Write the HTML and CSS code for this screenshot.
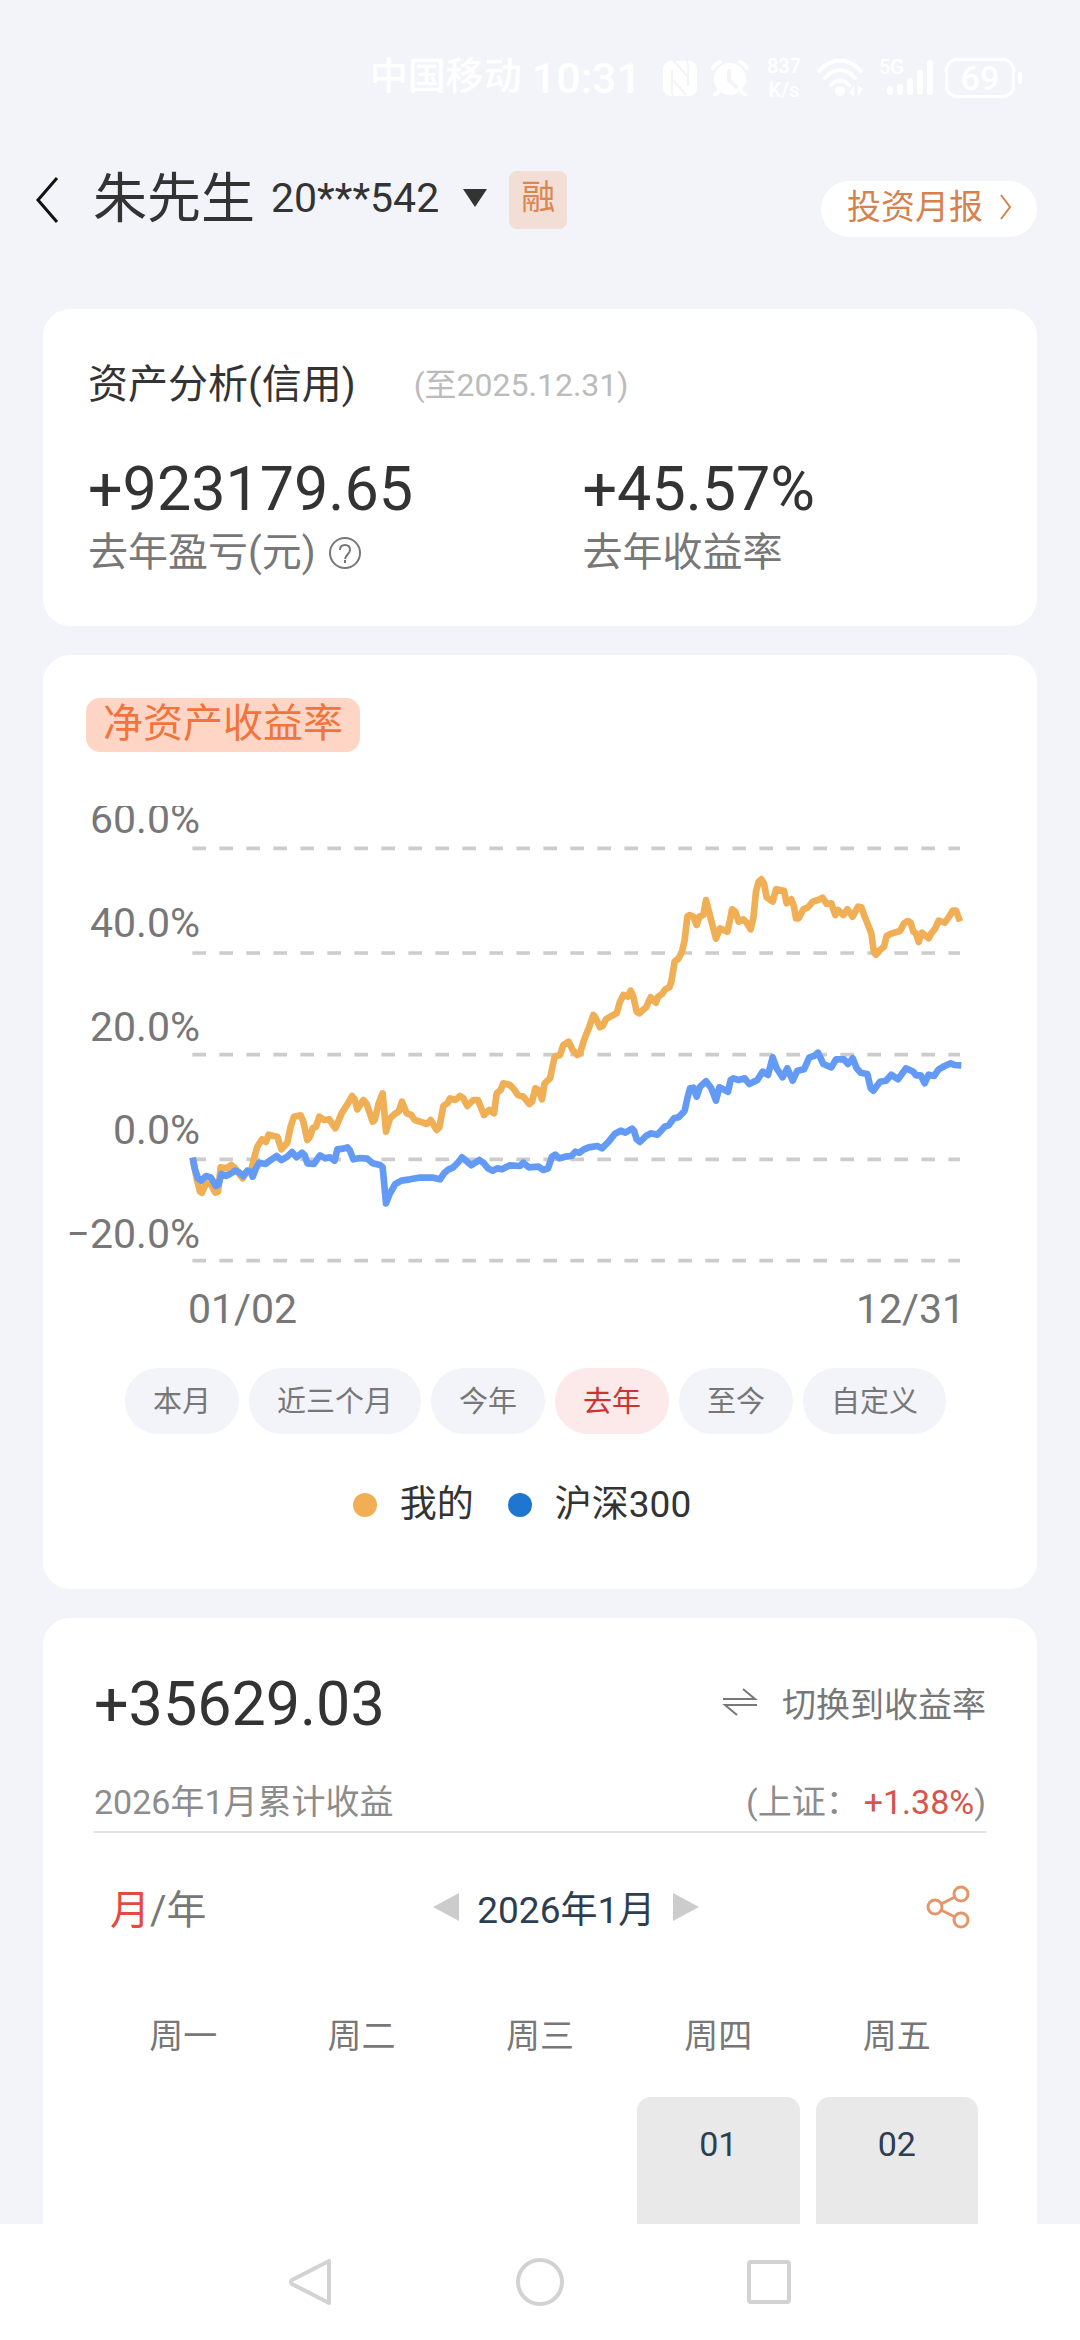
FILE: index.html
```html
<!DOCTYPE html>
<html lang="zh-CN">
<head>
	<meta charset="utf-8">
	<meta name="viewport" content="width=device-width, initial-scale=1">
	<title>资产分析</title>
	<link rel="stylesheet" href="styles.css">
</head>
<body>
	<div class="status-bar">
		<span class="carrier">中国移动</span>
		<span class="clock">10:31</span>
		<svg class="icon-nfc" width="34" height="36" viewBox="0 0 34 36">
			<rect width="34" height="35" y="1" rx="8" fill="#fff"/>
			<path d="M10 36q-2-5-1-12V10M24 0q2 5 1 12v14M11 1l13 15M10 20l13 15" stroke="#f3f4f9" stroke-width="2" fill="none"/>
		</svg>
		<svg class="icon-alarm" width="38" height="36" viewBox="0 0 38 36">
			<circle cx="19" cy="19" r="16" fill="#fff"/>
			<path d="M2 8q2-4 7-6M36 8q-2-4-7-6M8 31l-4 4M30 31l4 4" stroke="#fff" stroke-width="4" stroke-linecap="round" fill="none"/>
			<path d="M18 9v11l8 8" stroke="#f3f4f9" stroke-width="4" fill="none"/>
		</svg>
		<span class="speed">837<br>K/s</span>
		<svg class="icon-wifi" width="48" height="38" viewBox="0 0 48 38">
			<path d="M2 12q21-21 42 0M8 19q15-16 30 0M14 26q9-9 18 0" stroke="#fff" stroke-width="4" stroke-linecap="round" fill="none"/>
			<circle cx="23" cy="32" r="5" fill="#fff"/>
			<path d="M32 34l5-7v10zM41 27v10l5-7z" fill="#fff"/>
		</svg>
		<span class="signal">
			<span class="signal-type">5G</span>
			<svg width="54" height="38" viewBox="0 0 54 38" stroke="#fff" stroke-width="6" stroke-linecap="round">
				<path d="M11 30v3M21 28v5M31 22v11M41 14v19M51 4v29"/>
			</svg>
		</span>
		<span class="battery"><span class="battery-level">69</span></span>
	</div>

	<header class="header">
		<button class="back" aria-label="返回">
			<svg width="24" height="48" viewBox="0 0 24 48"><path d="M22 2L3 24l19 22" stroke="#111" stroke-width="3" fill="none"/></svg>
		</button>
		<h1 class="user-name">朱先生</h1>
		<button class="account">20***542
			<svg width="24" height="18" viewBox="0 0 24 18"><path d="M0 0h24L12 18z" fill="#333"/></svg>
		</button>
		<span class="badge">融</span>
		<a class="report-link" href="#report">投资月报
			<svg width="14" height="26" viewBox="0 0 14 26"><path d="M2 1l9 12-9 12" stroke="#d5824e" stroke-width="2" fill="none"/></svg>
		</a>
	</header>

	<main class="content">
		<section class="card summary">
			<div class="summary-title">
				<h2>资产分析(信用)</h2>
				<span class="until">(至2025.12.31)</span>
			</div>
			<div class="summary-grid">
				<div>
					<div class="amount">+923179.65</div>
					<div class="label">去年盈亏(元)
						<button class="help" aria-label="说明">
							<svg width="34" height="34" viewBox="0 0 34 34" fill="none" stroke="#777" stroke-width="2">
								<circle cx="17" cy="17" r="15"/>
								<path d="M12 14q0-5 5-5t5 5q0 2-2 4t-3 5M17 24v3"/>
							</svg>
						</button>
					</div>
				</div>
				<div>
					<div class="amount">+45.57%</div>
					<div class="label">去年收益率</div>
				</div>
			</div>
		</section>

		<section class="card yield">
			<h2 class="tag">净资产收益率</h2>
			<svg class="chart" viewBox="0 0 994 530">
				<g class="axis axis-y">
					<text x="157" y="27">60.0%</text>
					<text x="157" y="131">40.0%</text>
					<text x="157" y="235">20.0%</text>
					<text x="157" y="338">0.0%</text>
					<text x="157" y="442">−20.0%</text>
				</g>
				<g class="axis">
					<text x="145" y="517">01/02</text>
					<text class="axis-end" x="922" y="517">12/31</text>
				</g>
				<svg x="137" y="14" width="800" height="450" viewBox="0 0 2400 1350">
					<path class="grid-line" d="M37 85H2340M37 399H2340M37 704H2340M37 1018H2340M37 1322H2340"/>
					<polyline class="line line-mine" points="38,1013 50,1075 60,1115 66,1118 78,1090 92,1092 106,1118 114,1115 122,1042 140,1045 154,1035 166,1045 180,1065 188,1075 200,1055 214,1050 222,1015 232,980 246,958 258,966 266,944 280,948 292,950 304,988 322,968 332,920 342,890 362,886 370,905 382,960 390,950 398,925 408,920 418,890 432,900 448,898 466,925 486,878 504,850 516,828 524,838 532,868 550,840 560,852 578,905 584,900 596,850 608,820 618,935 630,895 644,882 656,875 666,845 680,880 694,885 704,900 720,905 740,912 752,900 770,930 778,922 790,858 802,850 810,835 826,840 840,828 850,835 862,858 880,840 894,840 912,885 928,870 942,880 950,820 962,810 970,790 990,795 1002,808 1014,825 1030,830 1048,852 1056,845 1066,805 1076,810 1086,838 1094,790 1110,775 1124,710 1140,705 1150,675 1166,665 1178,690 1192,705 1200,700 1212,660 1228,620 1240,585 1246,592 1260,622 1268,618 1278,598 1290,590 1310,580 1320,545 1330,525 1344,530 1352,512 1360,530 1370,575 1378,580 1398,562 1412,532 1428,548 1434,530 1446,522 1456,508 1468,502 1474,485 1484,425 1496,415 1506,395 1514,360 1522,290 1528,285 1540,290 1550,315 1558,290 1570,285 1578,240 1588,280 1608,356 1620,325 1642,335 1650,300 1656,268 1666,275 1676,305 1690,298 1700,308 1712,328 1720,295 1728,215 1736,185 1744,178 1752,190 1760,232 1778,245 1788,208 1812,212 1820,250 1834,238 1842,260 1848,295 1856,295 1870,268 1884,262 1898,245 1914,240 1928,233 1940,252 1954,250 1966,285 1974,270 1990,285 2002,268 2018,290 2034,260 2044,262 2056,295 2074,340 2082,398 2088,404 2100,390 2112,380 2120,348 2136,340 2160,333 2172,310 2184,303 2192,308 2200,335 2208,340 2216,366 2226,338 2246,355 2254,340 2266,325 2276,302 2294,308 2306,292 2318,272 2328,272 2340,304"/>
					<polyline class="line line-index" points="38,1013 44,1045 54,1075 64,1082 78,1068 92,1072 108,1098 116,1093 124,1062 138,1068 150,1062 166,1052 176,1056 190,1068 202,1052 212,1055 218,1070 228,1045 238,1028 256,1032 272,1020 290,1008 304,1020 322,1010 336,996 350,1012 366,998 374,1005 382,1030 402,1032 410,1020 420,1006 436,1015 450,1012 464,1022 472,988 490,986 502,982 510,992 520,1018 540,1014 562,1016 578,1030 600,1035 608,1042 618,1150 630,1120 646,1092 664,1082 690,1078 716,1073 760,1073 780,1078 792,1060 806,1048 820,1042 836,1025 846,1012 858,1022 874,1036 898,1020 910,1028 924,1045 938,1052 952,1045 966,1048 990,1036 1020,1038 1030,1028 1046,1042 1076,1040 1090,1050 1104,1045 1116,1010 1126,1004 1138,1015 1156,1010 1174,1008 1186,995 1198,998 1212,988 1226,982 1252,978 1266,985 1286,965 1304,942 1322,932 1336,938 1356,926 1362,932 1370,958 1380,966 1398,948 1412,940 1432,944 1454,920 1466,916 1482,895 1496,892 1514,872 1522,835 1530,805 1540,803 1550,830 1560,800 1578,784 1594,805 1608,842 1618,802 1630,808 1644,815 1652,780 1660,775 1676,780 1694,775 1708,792 1732,780 1748,755 1764,765 1778,712 1790,745 1808,772 1822,745 1838,782 1852,752 1872,748 1888,712 1902,708 1914,698 1930,732 1954,742 1968,718 1992,718 2004,732 2018,715 2030,745 2042,758 2062,762 2072,805 2080,812 2100,785 2118,782 2134,764 2154,778 2178,745 2200,755 2208,766 2222,766 2234,790 2246,764 2262,768 2276,748 2294,738 2312,730 2324,735 2344,736"/>
				</svg>
			</svg>
			<div class="ranges">
				<button>本月</button>
				<button>近三个月</button>
				<button>今年</button>
				<button class="active">去年</button>
				<button>至今</button>
				<button>自定义</button>
			</div>
			<div class="legend">
				<span class="legend-item mine">我的</span>
				<span class="legend-item index">沪深300</span>
			</div>
		</section>

		<section class="card calendar">
			<div class="calendar-top">
				<div class="amount">+35629.03</div>
				<button class="switch">
					<svg width="36" height="28" viewBox="0 0 36 28" fill="none" stroke="#777" stroke-width="2">
						<path d="M1 11h32L21 1M35 17H3l12 10"/>
					</svg>
					切换到收益率
				</button>
			</div>
			<div class="calendar-sub">
				<span>2026年1月累计收益</span>
				<span>(上证：<span class="up">+1.38%</span>)</span>
			</div>
			<div class="calendar-nav">
				<div class="mode"><button class="active">月</button>/<button>年</button></div>
				<div class="month">
					<button aria-label="上个月"><svg width="26" height="28" viewBox="0 0 26 28"><path d="M26 0v28L0 14z" fill="#ccc"/></svg></button>
					<span>2026年1月</span>
					<button aria-label="下个月"><svg width="26" height="28" viewBox="0 0 26 28"><path d="M0 0v28l26-14z" fill="#ccc"/></svg></button>
				</div>
				<button class="share" aria-label="分享">
					<svg width="44" height="44" viewBox="0 0 44 44" fill="none" stroke="#e2976a" stroke-width="3">
						<circle cx="9" cy="22" r="7"/>
						<circle cx="35" cy="9" r="7"/>
						<circle cx="35" cy="35" r="7"/>
						<path d="M15 19l14-7M15 25l14 7"/>
					</svg>
				</button>
			</div>
			<table class="days">
				<thead>
					<tr>
						<th>周一</th>
						<th>周二</th>
						<th>周三</th>
						<th>周四</th>
						<th>周五</th>
					</tr>
				</thead>
				<tbody>
					<tr>
						<td></td>
						<td></td>
						<td></td>
						<td><button>01</button></td>
						<td><button>02</button></td>
					</tr>
				</tbody>
			</table>
		</section>
	</main>

	<nav class="system-nav">
		<button aria-label="返回"><svg width="48" height="50" viewBox="0 0 48 50"><path d="M42 4v42L5 27q-2-2 0-4z"/></svg></button>
		<button aria-label="主屏幕"><svg width="48" height="50" viewBox="0 0 48 50"><circle cx="24" cy="25" r="22"/></svg></button>
		<button aria-label="最近任务"><svg width="48" height="50" viewBox="0 0 48 50"><rect x="4" y="5" width="40" height="40" rx="2"/></svg></button>
	</nav>
</body>
</html>
```

FILE: styles.css
```css
* {
	box-sizing: border-box;
}

body, button {
	font-family: Roboto, "Noto Sans CJK SC", sans-serif;
}

body {
	display: flex;
	flex-direction: column;
	height: 100vh;
	margin: 0;
	background: #f3f4f9;
	color: #333;
	overflow: hidden;
}

button {
	border: none;
	background: none;
	padding: 0;
	margin: 0;
	color: inherit;
	font-size: inherit;
	line-height: inherit;
}

svg {
	display: block;
	flex-shrink: 0;
}

h1, h2 {
	margin: 0;
	font-weight: normal;
}

/* status bar */
.status-bar {
	display: flex;
	flex-shrink: 0;
	align-items: center;
	justify-content: flex-end;
	height: 120px;
	padding: 36px 58px 0 0;
	color: #fff;
	font-weight: 500;
}

.carrier {
	font-size: 38px;
	line-height: 44px;
	padding-bottom: 4px;
}

.clock {
	margin: 0 22px 0 10px;
	font-size: 43px;
}

.icon-alarm {
	margin: 0 18px 0 14px;
}

.speed {
	font-size: 20px;
	line-height: 24px;
	text-align: center;
}

.icon-wifi {
	margin: 0 14px 0 16px;
}

.signal {
	position: relative;
}

.signal-type {
	position: absolute;
	top: -4px;
	left: 0;
	font-size: 20px;
	line-height: 24px;
}

.battery {
	display: flex;
	align-items: center;
	margin-left: 12px;
}

.battery-level {
	width: 70px;
	border: 3px solid #fff;
	border-radius: 12px;
	font-size: 34px;
	line-height: 34px;
	text-align: center;
}

.battery::after {
	content: "";
	width: 4px;
	height: 12px;
	margin-left: 3px;
	border-radius: 2px;
	background: #fff;
}

/* header */
.header {
	display: flex;
	flex-shrink: 0;
	align-items: center;
	height: 160px;
	padding: 0 43px 0 35px;
}

.user-name {
	margin: 0 16px 0 34px;
	font-size: 54px;
	line-height: 64px;
}

.account {
	display: flex;
	align-items: center;
	gap: 24px;
	padding-bottom: 4px;
	font-size: 41px;
}

.badge {
	height: 58px;
	margin-left: 22px;
	padding: 0 12px;
	border-radius: 8px;
	background: #f2ded4;
	color: #dd8450;
	font-size: 34px;
	line-height: 52px;
}

.report-link {
	display: flex;
	align-items: center;
	gap: 16px;
	height: 56px;
	margin: 18px 0 0 auto;
	padding: 0 24px 4px 26px;
	border-radius: 28px;
	background: #fff;
	color: #d5824e;
	font-size: 34px;
	line-height: 50px;
	text-decoration: none;
}

/* cards */
.content {
	display: flex;
	flex: 1;
	flex-direction: column;
	gap: 29px;
	min-height: 0;
	padding: 29px 43px 0;
	overflow: hidden;
}

.card {
	flex-shrink: 0;
	border-radius: 27px;
	background: #fff;
}

.amount {
	font-size: 61px;
	line-height: 72px;
}

.summary {
	padding: 50px 0 47px 45px;
}

.summary-title {
	display: flex;
	align-items: center;
	gap: 58px;
	line-height: 52px;
}

.summary-title h2 {
	font-size: 40px;
}

.until {
	color: #bbb;
	font-size: 32px;
}

.summary-grid {
	display: grid;
	grid-template-columns: 1fr 1fr;
	gap: 40px;
	margin-top: 42px;
}

.label {
	display: flex;
	align-items: center;
	gap: 12px;
	margin-top: 2px;
	color: #777;
	font-size: 40px;
	line-height: 52px;
}

/* yield chart */
.yield {
	padding: 43px 0 61px;
}

.tag {
	width: fit-content;
	height: 54px;
	margin-left: 43px;
	padding: 0 17px;
	border-radius: 14px;
	background: #ffd6c6;
	color: #f0743b;
	font-size: 40px;
	line-height: 52px;
}

.chart {
	width: 100%;
	margin-top: 54px;
}

.axis {
	fill: #777;
	font-size: 41px;
}

.axis-y, .axis-end {
	text-anchor: end;
}

.grid-line {
	stroke: #ccc;
	stroke-width: 11;
	stroke-dasharray: 41 40;
}

.line {
	fill: none;
	stroke-width: 20;
	stroke-linejoin: round;
}

.line-mine {
	stroke: #f0ae55;
}

.line-index {
	stroke: #639af5;
}

.ranges {
	display: flex;
	gap: 10px;
	margin-top: 32px;
	padding: 0 82px;
}

.ranges button {
	height: 66px;
	padding: 0 28px 4px;
	border-radius: 33px;
	background: #f3f4f9;
	color: #777;
	font-size: 29px;
	white-space: nowrap;
}

.ranges .active {
	background: #fce9ea;
	color: #cc3333;
}

.legend {
	display: flex;
	justify-content: center;
	gap: 34px;
	margin-top: 47px;
	margin-bottom: -1px;
	padding-right: 36px;
	font-size: 37px;
	line-height: 48px;
}

.legend-item {
	display: flex;
	align-items: center;
	gap: 23px;
}

.legend-item::before {
	content: "";
	width: 24px;
	height: 24px;
	border-radius: 50%;
}

.mine::before {
	background: #f2ae55;
}

.index::before {
	background: #1f76d0;
}

/* calendar */
.calendar {
	padding: 50px 51px 0;
}

.calendar-top, .calendar-sub, .calendar-nav {
	display: flex;
	align-items: center;
	justify-content: space-between;
}

.switch {
	display: flex;
	align-items: center;
	gap: 24px;
	padding-bottom: 4px;
	color: #777;
	font-size: 34px;
}

.calendar-sub {
	margin-top: 38px;
	padding-bottom: 5px;
	border-bottom: 2px solid #e2e2e2;
	color: #8c8c8c;
	font-size: 34px;
	line-height: 48px;
}

.up {
	margin-left: 4px;
	color: #d9534a;
}

.calendar-nav {
	height: 60px;
	margin-top: 44px;
	padding: 0 16px 0 16px;
}

.mode {
	color: #777;
	font-size: 40px;
}

.mode .active {
	color: #e34b3e;
}

.month {
	display: flex;
	align-items: center;
	gap: 18px;
	color: #2c3e50;
	font-size: 37px;
}

.days {
	width: 100%;
	margin-top: 75px;
	border-spacing: 0;
	table-layout: fixed;
	font-size: 34px;
}

.days th {
	padding: 0 0 37px;
	color: #777;
	font-weight: normal;
	line-height: 48px;
}

.days td {
	padding: 0 8px;
}

.days button {
	display: block;
	width: 100%;
	height: 162px;
	padding-bottom: 68px;
	border-radius: 14px;
	background: #e9e9e9;
	color: #2c3e50;
}

/* system navigation */
.system-nav {
	display: flex;
	flex-shrink: 0;
	align-items: center;
	justify-content: center;
	gap: 181px;
	height: 116px;
	background: #fff;
}

.system-nav svg {
	fill: none;
	stroke: #d2d2d2;
	stroke-width: 4;
	stroke-linejoin: round;
}
```
